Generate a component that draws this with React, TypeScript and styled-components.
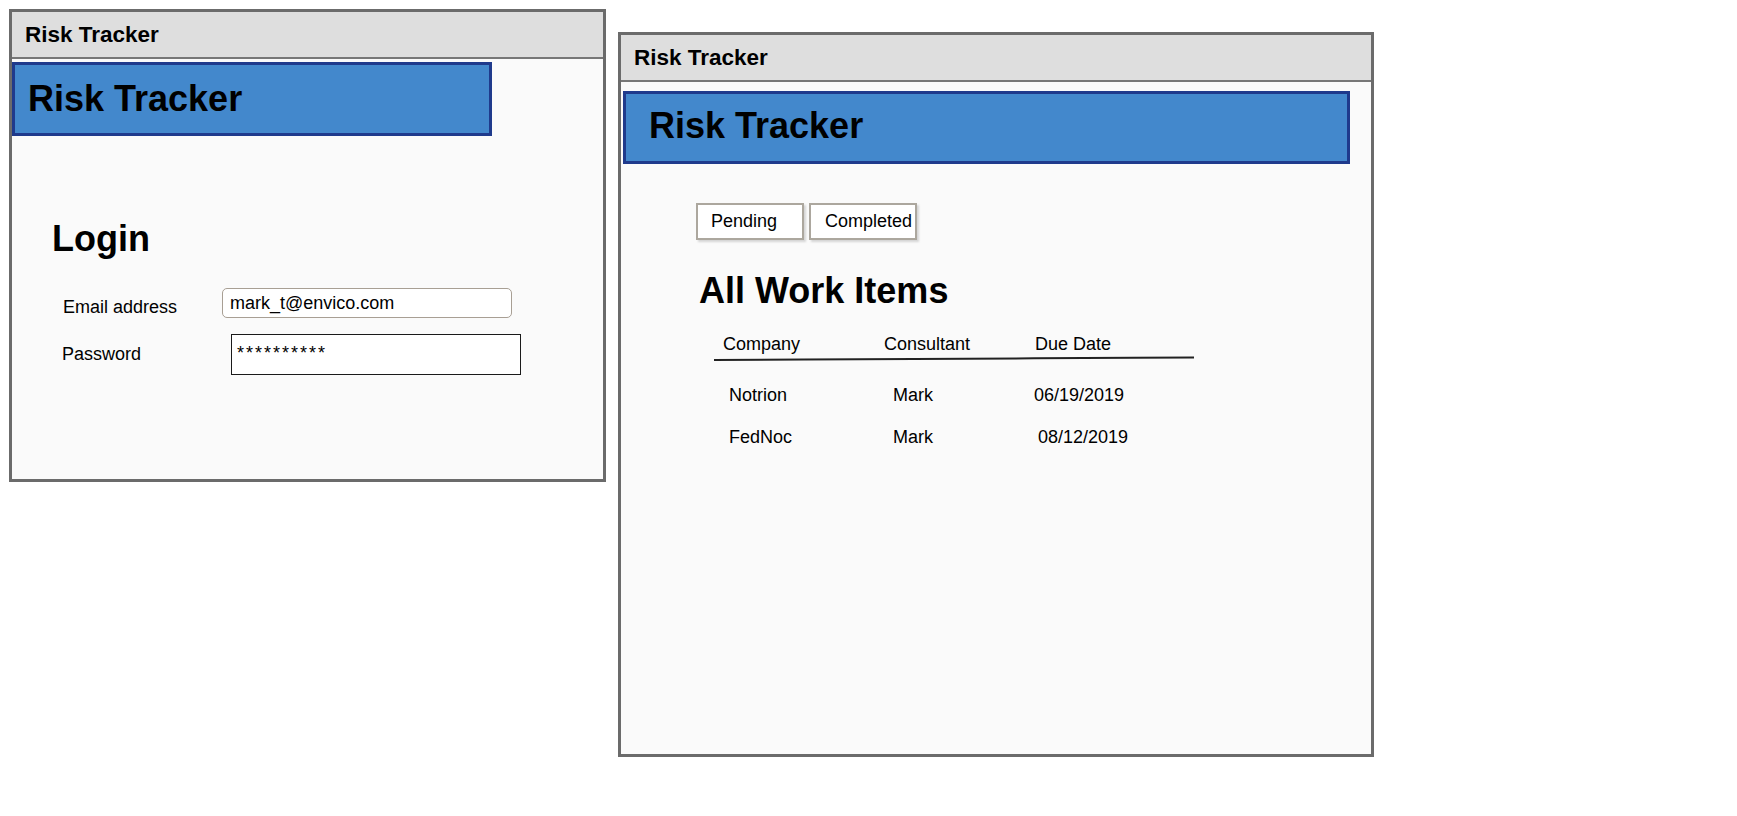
import styled, { createGlobalStyle } from "styled-components";

const GlobalStyle = createGlobalStyle`
  body {
    margin: 0;
    background: #ffffff;
    font-family: "Liberation Sans", Arial, sans-serif;
    color: #000;
  }
`;

const Desktop = styled.div`
  display: flex;
  align-items: flex-start;
  gap: 12px;
  padding: 9px;
`;

const Window = styled.div<{ $w: number; $h: number; $top?: number }>`
  box-sizing: border-box;
  width: ${(p) => p.$w}px;
  height: ${(p) => p.$h}px;
  margin-top: ${(p) => p.$top ?? 0}px;
  border: 3px solid #6b6b6b;
  background: #fafafa;
  display: flex;
  flex-direction: column;
`;

const TitleBar = styled.div`
  box-sizing: border-box;
  height: 47px;
  flex-shrink: 0;
  display: flex;
  align-items: center;
  padding-left: 13px;
  background: #dedede;
  border-bottom: 2px solid #777;
  font-size: 22.5px;
  font-weight: bold;
`;

const Banner = styled.div<{ $w: number; $h: number; $mt: number; $ml: number; $pad: number; $lift: number }>`
  box-sizing: border-box;
  width: ${(p) => p.$w}px;
  height: ${(p) => p.$h}px;
  margin: ${(p) => p.$mt}px 0 0 ${(p) => p.$ml}px;
  padding-left: ${(p) => p.$pad}px;
  padding-bottom: ${(p) => p.$lift}px;
  display: flex;
  align-items: center;
  background: #4388cc;
  border: 3px solid #1f3a8c;
  font-size: 36px;
  font-weight: bold;
`;

const Heading = styled.h1<{ $size: number; $mt: number; $ml: number }>`
  margin: ${(p) => p.$mt}px 0 0 ${(p) => p.$ml}px;
  font-size: ${(p) => p.$size}px;
  line-height: 40px;
  font-weight: bold;
`;

const Form = styled.div`
  display: flex;
  flex-direction: column;
  margin: 29px 0 0 50px;
`;

const FormRow = styled.div<{ $mt?: number }>`
  display: flex;
  align-items: flex-start;
  margin-top: ${(p) => p.$mt ?? 0}px;
`;

const Label = styled.div<{ $w: number; $pt: number; $pl: number }>`
  box-sizing: border-box;
  width: ${(p) => p.$w}px;
  padding-top: ${(p) => p.$pt}px;
  padding-left: ${(p) => p.$pl}px;
  font-size: 18px;
  line-height: 22px;
`;

const TextField = styled.div`
  box-sizing: border-box;
  width: 290px;
  height: 30px;
  display: flex;
  align-items: center;
  padding-left: 7px;
  background: #fff;
  border: 1.5px solid #a89f94;
  border-radius: 5px;
  font-size: 18px;
  line-height: 22px;
`;

const PasswordField = styled.div`
  box-sizing: border-box;
  width: 290px;
  height: 41px;
  padding: 8px 0 0 5px;
  background: #fff;
  border: 1.5px solid #1a1a1a;
  font-size: 18px;
  line-height: 20px;
  letter-spacing: 2px;
`;

const Tabs = styled.div`
  display: flex;
  gap: 5px;
  margin: 39px 0 0 75px;
`;

const Tab = styled.div<{ $pad: number }>`
  box-sizing: border-box;
  width: 108px;
  height: 37px;
  display: flex;
  align-items: center;
  padding-left: ${(p) => p.$pad}px;
  background: #fff;
  border: 2px solid #aca79e;
  box-shadow: 2px 2px 2px rgba(0, 0, 0, 0.15);
  font-size: 18px;
  white-space: nowrap;
`;

const Table = styled.div`
  width: 480px;
  margin: 22px 0 0 93px;
`;

const TableRow = styled.div<{ $mt?: number }>`
  display: grid;
  grid-template-columns: 160px 150px 1fr;
  margin-top: ${(p) => p.$mt ?? 0}px;
  font-size: 18px;
  line-height: 22px;
`;

const Cell = styled.div<{ $indent: number }>`
  padding-left: ${(p) => p.$indent}px;
  white-space: nowrap;
`;

const Rule = styled.svg`
  display: block;
`;

const rows = [
  { company: "Notrion", consultant: "Mark", due: "06/19/2019", dueIndent: 10 },
  { company: "FedNoc", consultant: "Mark", due: "08/12/2019", dueIndent: 14 },
];

function LoginWindow() {
  return (
    <Window $w={597} $h={473}>
      <TitleBar>Risk Tracker</TitleBar>
      <Banner $w={480} $h={74} $mt={3} $ml={0} $pad={13} $lift={1}>
        Risk Tracker
      </Banner>
      <Heading $size={36} $mt={83} $ml={40}>
        Login
      </Heading>
      <Form>
        <FormRow>
          <Label $w={160} $pt={8} $pl={1}>Email address</Label>
          <TextField>mark_t@envico.com</TextField>
        </FormRow>
        <FormRow $mt={16}>
          <Label $w={169} $pt={9} $pl={0}>Password</Label>
          <PasswordField>**********</PasswordField>
        </FormRow>
      </Form>
    </Window>
  );
}

function WorkItemsWindow() {
  return (
    <Window $w={756} $h={725} $top={23}>
      <TitleBar>Risk Tracker</TitleBar>
      <Banner $w={727} $h={73} $mt={9} $ml={2} $pad={23} $lift={3}>
        Risk Tracker
      </Banner>
      <Tabs>
        <Tab $pad={13}>Pending</Tab>
        <Tab $pad={14}>Completed</Tab>
      </Tabs>
      <Heading $size={36} $mt={31} $ml={78}>
        All Work Items
      </Heading>
      <Table>
        <TableRow>
          <Cell $indent={9}>Company</Cell>
          <Cell $indent={10}>Consultant</Cell>
          <Cell $indent={11}>Due Date</Cell>
        </TableRow>
        <Rule width="480" height="6" viewBox="0 0 480 6">
          <path d="M0 5 L90 4.6 L200 4 L320 3.3 L420 2.8 L480 2.5" stroke="#222" strokeWidth="2" fill="none" />
        </Rule>
        {rows.map((r, i) => (
          <TableRow key={r.company} $mt={i === 0 ? 23 : 20}>
            <Cell $indent={15}>{r.company}</Cell>
            <Cell $indent={19}>{r.consultant}</Cell>
            <Cell $indent={r.dueIndent}>{r.due}</Cell>
          </TableRow>
        ))}
      </Table>
    </Window>
  );
}

export default function App() {
  return (
    <>
      <GlobalStyle />
      <Desktop>
        <LoginWindow />
        <WorkItemsWindow />
      </Desktop>
    </>
  );
}
